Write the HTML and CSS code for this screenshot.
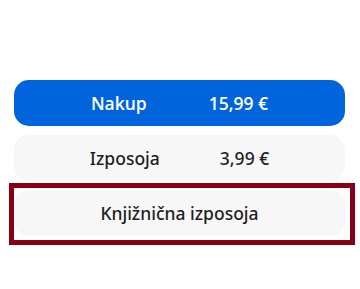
FILE: index.html
```html
<!DOCTYPE html>
<html lang="sl">
<head>
<meta charset="utf-8">
<link rel="stylesheet" href="styles.css">
</head>
<body>
<div class="options">
  <button class="opt opt-primary"><span>Nakup</span><span>15,99 €</span></button>
  <button class="opt opt-secondary"><span>Izposoja</span><span>3,99 €</span></button>
  <div class="focus-frame">
    <button class="opt opt-single"><span>Knjižnična izposoja</span></button>
  </div>
</div>
</body>
</html>
```
FILE: styles.css
```css
html, body {
  margin: 0;
  padding: 0;
  background: #ffffff;
}
body {
  font-family: "Open Sans", "Noto Sans", sans-serif;
}
.options {
  display: flex;
  flex-direction: column;
  padding: 80px 15px 0 14px;
}
.opt {
  display: flex;
  align-items: center;
  justify-content: center;
  gap: 62px;
  height: 46px;
  width: 100%;
  margin: 0 0 9px 0;
  border: none;
  border-radius: 15px;
  background: #f7f7f7;
  color: #1f1f1f;
  font-family: inherit;
  font-size: 17.5px;
  font-weight: 600;
  padding: 0;
}
.opt-primary {
  background: #0064dc;
  color: #ffffff;
}
.opt-secondary {
  font-family: "Noto Sans", "Open Sans", sans-serif;
  font-weight: 500;
  gap: 60px;
}
.focus-frame {
  margin: -7px -10px 0 -5px;
  border: 5px solid #880018;
  padding: 2px 5px 4px 0;
}
.opt-single {
  margin: 0;
  font-family: "Noto Sans", "Open Sans", sans-serif;
  font-size: 17.5px;
  font-weight: 500;
}
```
